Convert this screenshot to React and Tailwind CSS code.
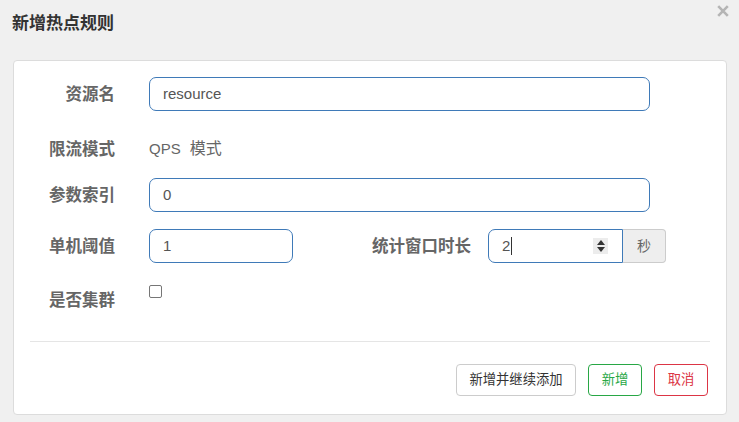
import React from "react";

const font = { fontFamily: '"Liberation Sans", "Noto Sans CJK SC", sans-serif' };

function Label({ children, className = "" }) {
  return (
    <div className={`h-[34px] flex items-center justify-end text-[16.5px] font-bold text-[#666] ${className}`}>
      {children}
    </div>
  );
}

function TextInput({ value, className = "" }) {
  return (
    <div className={`h-[34px] border border-[#3f7ab8] rounded-[7px] bg-white flex items-center pl-[13px] text-[15px] text-[#555] ${className}`}>
      {value}
    </div>
  );
}

export default function App() {
  return (
    <div className="w-[739px] h-[422px] bg-[#f0f0f0] relative overflow-hidden" style={font}>
      <div className="h-[60px] flex items-start pl-[12px] pt-[13px]">
        <div className="text-[17px] font-bold text-[#333] leading-[22px]">新增热点规则</div>
      </div>
      <svg className="absolute left-[717px] top-[5px]" width="12" height="12" viewBox="0 0 12 12">
        <path d="M1.2 1.2 L10.8 10.8 M10.8 1.2 L1.2 10.8" stroke="#b5b5b5" strokeWidth="2.6" strokeLinecap="butt" />
      </svg>
      <div className="ml-[13px] w-[714px] h-[355px] bg-white border border-[#dcdcdc] rounded-[4px] pt-[16px]">
        {/* row 1 */}
        <div className="flex">
          <Label className="w-[101px]">资源名</Label>
          <TextInput value="resource" className="ml-[34px] w-[501px]" />
        </div>
        {/* row 2 */}
        <div className="flex mt-[21px]">
          <Label className="w-[101px]">限流模式</Label>
          <div className="ml-[34px] h-[34px] flex items-center text-[15px] text-[#666]">
            <span>QPS</span>
            <span className="text-[16px] ml-[9px]">模式</span>
          </div>
        </div>
        {/* row 3 */}
        <div className="flex mt-[12px]">
          <Label className="w-[101px]">参数索引</Label>
          <TextInput value="0" className="ml-[34px] w-[501px]" />
        </div>
        {/* row 4 */}
        <div className="flex mt-[17px]">
          <Label className="w-[101px]">单机阈值</Label>
          <TextInput value="1" className="ml-[34px] w-[144px]" />
          <Label className="w-[178px]">统计窗口时长</Label>
          <div className="ml-[17px] flex h-[34px]">
            <div className="w-[135px] h-[34px] border border-[#3f7ab8] rounded-l-[7px] bg-white flex items-center pl-[13px] pr-[14px] text-[15px] text-[#555]">
              <span>2</span>
              <span className="w-px h-[18px] bg-[#333] ml-px"></span>
              <div className="ml-auto w-[15px] h-[16px] bg-[#ececec] flex flex-col items-center justify-center gap-[2px]">
                <svg width="8" height="5" viewBox="0 0 8 5"><path d="M0 5 L4 0 L8 5 Z" fill="#333" /></svg>
                <svg width="8" height="5" viewBox="0 0 8 5"><path d="M0 0 L4 5 L8 0 Z" fill="#333" /></svg>
              </div>
            </div>
            <div className="w-[43px] h-[34px] border border-l-0 border-[#cccccc] rounded-r-[4px] bg-[#eeeeee] flex items-center justify-center text-[14px] text-[#666]">
              秒
            </div>
          </div>
        </div>
        {/* row 5 */}
        <div className="flex items-start mt-[20px]">
          <Label className="w-[101px]">是否集群</Label>
          <div className="ml-[34px] mt-[2px] w-[13px] h-[13px] border border-[#767676] rounded-[2px] bg-white"></div>
        </div>
        <div className="mx-[16px] mt-[24px] h-px bg-[#e5e5e5]"></div>
        <div className="flex justify-end gap-[12px] pr-[18px] mt-[22px]">
          <div className="h-[32px] w-[120px] border border-[#cccccc] rounded-[4px] flex items-center justify-center text-[13.3px] text-[#333] bg-white">
            新增并继续添加
          </div>
          <div className="h-[32px] w-[54px] border border-[#28a745] rounded-[4px] flex items-center justify-center text-[13.3px] text-[#28a745] bg-white">
            新增
          </div>
          <div className="h-[32px] w-[54px] border border-[#dc3545] rounded-[4px] flex items-center justify-center text-[13.3px] text-[#dc3545] bg-white">
            取消
          </div>
        </div>
      </div>
    </div>
  );
}
